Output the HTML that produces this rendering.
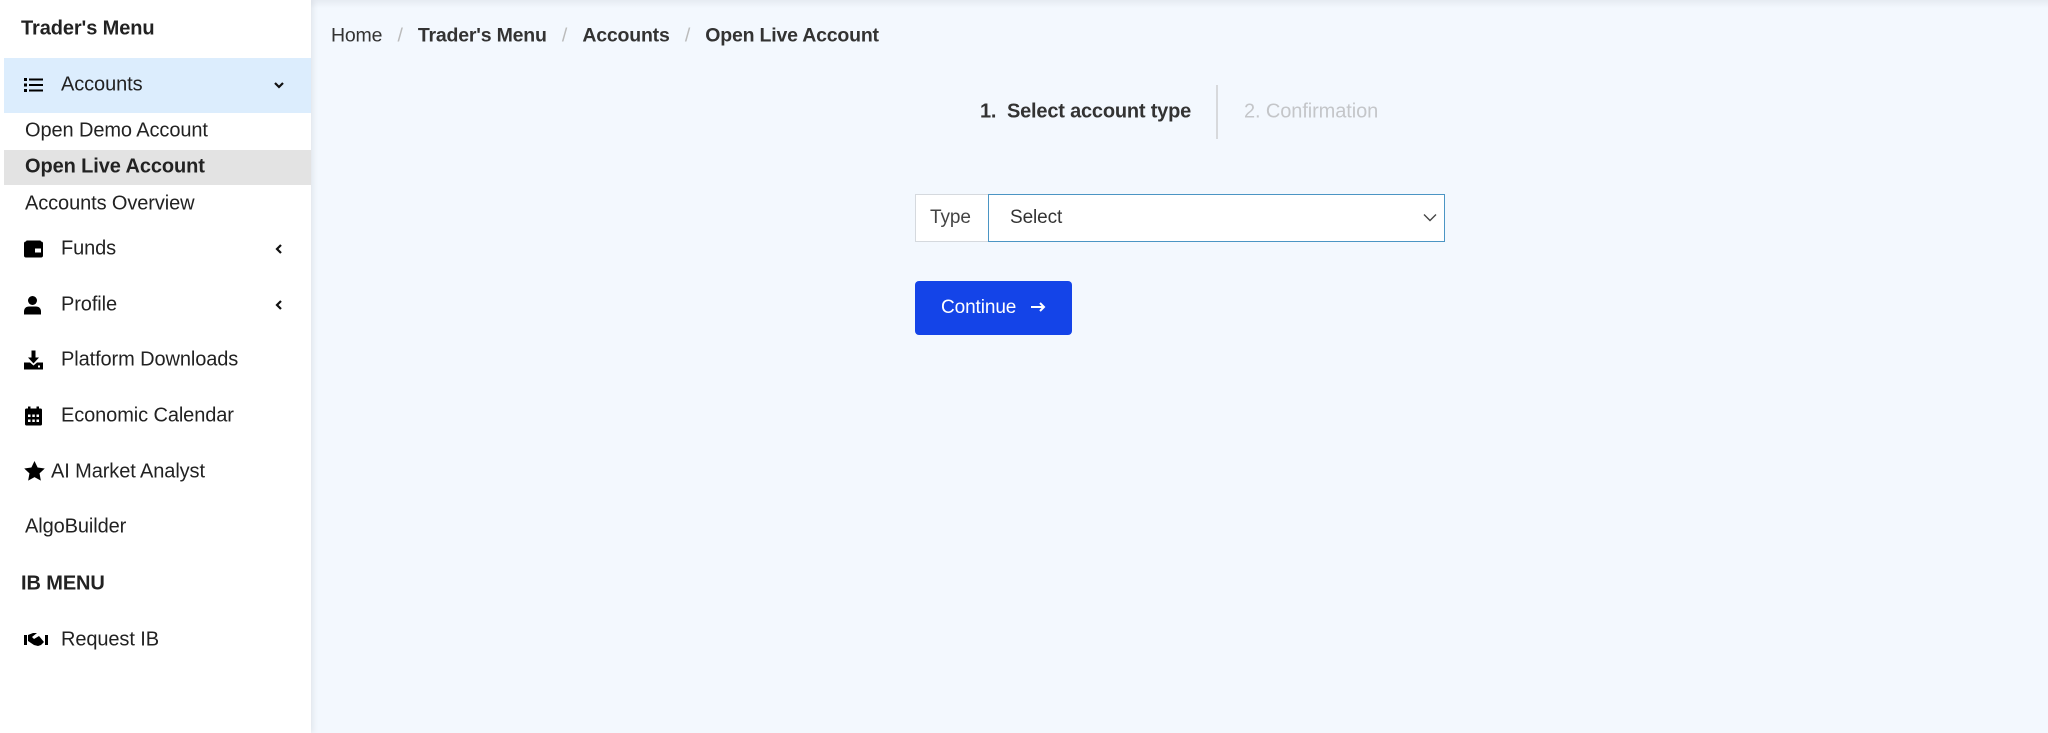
<!DOCTYPE html>
<html><head><meta charset="utf-8"><style>
*{margin:0;padding:0;box-sizing:border-box}
body{width:2048px;height:733px;overflow:hidden;background:#f3f8fe;font-family:"Liberation Sans",sans-serif;color:#222;position:relative}
.sb{position:absolute;left:0;top:0;width:311px;height:733px;background:#fff;box-shadow:2px 0 6px rgba(0,0,0,.08)}
.a{position:absolute;white-space:nowrap}
.t{font-size:20px;transform:translateY(-50%);letter-spacing:-0.1px}
.ic{position:absolute;transform:translateY(-50%)}
.top{position:absolute;left:311px;top:0;right:0;height:8px;background:linear-gradient(#e6ebf2,#f3f8fe)}
</style></head><body>
<div class="top"></div>
<div class="sb">
<div class="a t" style="left:21px;top:29px;font-weight:bold;font-size:20px">Trader's Menu</div>
<div class="a" style="left:4px;top:58px;width:307px;height:55px;background:#dcedfd"></div>
<svg class="ic" style="left:24px;top:85px" width="20" height="16" viewBox="0 0 20 16"><rect x="0" y="1" width="3" height="3"/><rect x="0" y="6.5" width="3" height="3"/><rect x="0" y="12" width="3" height="3"/><rect x="5" y="1.5" width="14" height="2"/><rect x="5" y="7" width="14" height="2"/><rect x="5" y="12.5" width="14" height="2"/></svg>
<div class="a t" style="left:61px;top:85px">Accounts</div>
<svg class="ic" style="left:273px;top:85px" width="12" height="10" viewBox="0 0 12 10"><path d="M2 3l4 4 4-4" stroke="#111" stroke-width="2.2" fill="none"/></svg>
<div class="a t" style="left:25px;top:131px">Open Demo Account</div>
<div class="a" style="left:4px;top:150px;width:307px;height:35px;background:#e3e3e3"></div>
<div class="a t" style="left:25px;top:167px;font-weight:bold">Open Live Account</div>
<div class="a t" style="left:25px;top:204px">Accounts Overview</div>
<svg class="ic" style="left:24px;top:249px" width="19" height="17" viewBox="0 0 19 17"><rect x="0" y="1" width="19" height="16" rx="2"/><rect x="11" y="8" width="6" height="4" fill="#fff"/><rect x="2" y="0" width="15" height="3" rx="1"/></svg>
<div class="a t" style="left:61px;top:249px">Funds</div>
<svg class="ic" style="left:274px;top:249px" width="10" height="12" viewBox="0 0 10 12"><path d="M7 2L3 6l4 4" stroke="#111" stroke-width="2.2" fill="none"/></svg>
<svg class="ic" style="left:24px;top:305px" width="17" height="19" viewBox="0 0 17 19"><circle cx="8.5" cy="5" r="4.5"/><path d="M0 19v-3c0-3 2-5 5-5h7c3 0 5 2 5 5v3z"/></svg>
<div class="a t" style="left:61px;top:305px">Profile</div>
<svg class="ic" style="left:274px;top:305px" width="10" height="12" viewBox="0 0 10 12"><path d="M7 2L3 6l4 4" stroke="#111" stroke-width="2.2" fill="none"/></svg>
<svg class="ic" style="left:24px;top:360px" width="19" height="19" viewBox="0 0 19 19"><rect x="7.5" y="0" width="4" height="8"/><path d="M4 7h11l-5.5 6z"/><path d="M0 12h6l3.5 3 3.5-3h6v7H0z"/><rect x="14" y="15" width="2" height="2" fill="#fff"/></svg>
<div class="a t" style="left:61px;top:360px">Platform Downloads</div>
<svg class="ic" style="left:25px;top:416px" width="17" height="19" viewBox="0 0 17 19"><rect x="3" y="0" width="2.5" height="4"/><rect x="11.5" y="0" width="2.5" height="4"/><rect x="0" y="2" width="17" height="17" rx="1.5"/><g fill="#fff"><rect x="3" y="8" width="2.5" height="2.5"/><rect x="7.3" y="8" width="2.5" height="2.5"/><rect x="11.5" y="8" width="2.5" height="2.5"/><rect x="3" y="13" width="2.5" height="2.5"/><rect x="7.3" y="13" width="2.5" height="2.5"/><rect x="11.5" y="13" width="2.5" height="2.5"/></g></svg>
<div class="a t" style="left:61px;top:416px">Economic Calendar</div>
<svg class="ic" style="left:24px;top:471px" width="21" height="20" viewBox="0 0 24 23"><path d="M12 0l3.6 7.5 8.2 1.1-6 5.7 1.5 8.2L12 18.6 4.7 22.5l1.5-8.2-6-5.7 8.2-1.1z"/></svg>
<div class="a t" style="left:51px;top:472px">AI Market Analyst</div>
<div class="a t" style="left:25px;top:527px">AlgoBuilder</div>
<div class="a t" style="left:21px;top:584px;font-weight:bold">IB MENU</div>
<svg class="ic" style="left:24px;top:640px" width="24" height="16" viewBox="0 0 24 16"><rect x="0" y="3" width="3" height="10"/><rect x="21" y="3" width="3" height="10"/><path d="M4 3l5-2h4l-5 4 2 2 5-3 5 6-3 3-3 1-4-1-6-4z"/></svg>
<div class="a t" style="left:61px;top:640px">Request IB</div>
</div>
<div class="a t" style="left:331px;top:36px;color:#333;font-size:19.5px;letter-spacing:-0.2px">Home <span style="color:#bbb;margin:0 10px">/</span> <b>Trader's Menu</b> <span style="color:#bbb;margin:0 10px">/</span> <b>Accounts</b> <span style="color:#bbb;margin:0 10px">/</span> <b>Open Live Account</b></div>
<div class="a t" style="left:980px;top:112px;font-weight:bold;color:#333;font-size:20px;letter-spacing:-0.2px">1.&nbsp; Select account type</div>
<div class="a" style="left:1216px;top:85px;width:2px;height:54px;background:#d7d9dc"></div>
<div class="a t" style="left:1244px;top:112px;color:#c4c6c9">2. Confirmation</div>
<div class="a" style="left:915px;top:194px;width:74px;height:48px;background:#fff;border:1px solid #d5d9de;border-right:none"></div>
<div class="a t" style="left:930px;top:218px;font-size:19px;color:#444">Type</div>
<div class="a" style="left:988px;top:194px;width:457px;height:48px;background:#fff;border:1.5px solid #4b95c4"></div>
<div class="a t" style="left:1010px;top:218px;font-size:19px;color:#333">Select</div>
<svg class="ic" style="left:1423px;top:218px" width="14" height="9" viewBox="0 0 14 9"><path d="M1 1l6 6 6-6" stroke="#444" stroke-width="1.4" fill="none"/></svg>
<div class="a" style="left:915px;top:281px;width:157px;height:54px;background:#1444e8;border-radius:4px"></div>
<div class="a t" style="left:941px;top:308px;color:#fff;font-size:19px">Continue</div>
<svg class="ic" style="left:1031px;top:307px" width="15" height="12" viewBox="0 0 15 12"><path d="M0 6h13M9 2l4 4-4 4" stroke="#fff" stroke-width="2" fill="none"/></svg>
</body></html>
